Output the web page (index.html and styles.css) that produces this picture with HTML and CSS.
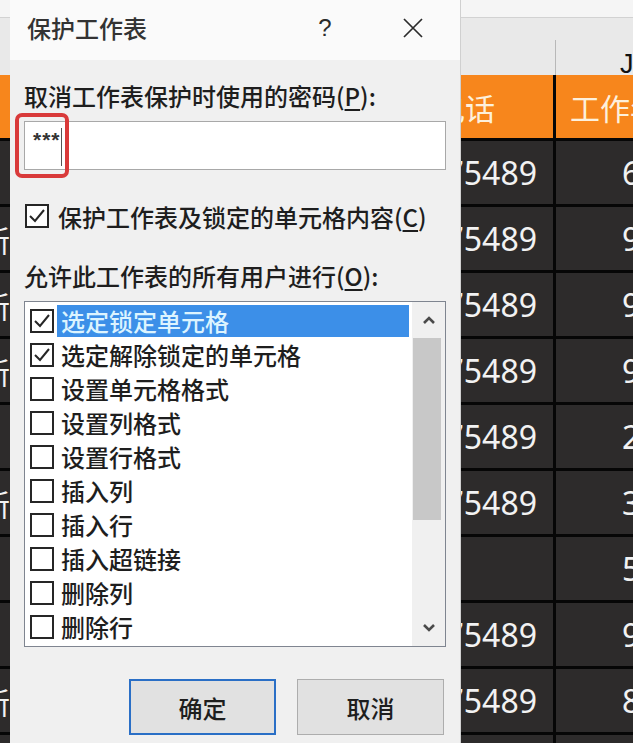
FILE: index.html
```html
<!DOCTYPE html>
<html lang="zh-CN">
<head>
    <meta charset="UTF-8">
    <meta name="viewport" content="width=device-width, initial-scale=1.0">
    <link rel="stylesheet" href="styles.css">
</head>
<body>
    <!-- spreadsheet behind the dialog -->
    <div class="sheet">
        <div class="sheet-top"></div>
        <div class="sheet-cols">
            <div></div>
            <div></div>
            <div class="colhead-j">J</div>
        </div>
        <div class="row head">
            <div class="cell a"></div>
            <div class="cell b">联系电话</div>
            <div class="cell c">工作年限</div>
        </div>
        <div class="row"><div class="cell a"></div><div class="cell b">75489</div><div class="cell c">6</div></div>
        <div class="row"><div class="cell a">张新</div><div class="cell b">75489</div><div class="cell c">9</div></div>
        <div class="row"><div class="cell a">李新</div><div class="cell b">75489</div><div class="cell c">9</div></div>
        <div class="row"><div class="cell a">王新</div><div class="cell b">75489</div><div class="cell c">9</div></div>
        <div class="row"><div class="cell a"></div><div class="cell b">75489</div><div class="cell c">2</div></div>
        <div class="row"><div class="cell a">赵新</div><div class="cell b">75489</div><div class="cell c">3</div></div>
        <div class="row"><div class="cell a"></div><div class="cell b"></div><div class="cell c">5</div></div>
        <div class="row"><div class="cell a"></div><div class="cell b">75489</div><div class="cell c">9</div></div>
        <div class="row"><div class="cell a">刘新</div><div class="cell b">75489</div><div class="cell c">8</div></div>
        <div class="row"><div class="cell a"></div><div class="cell b"></div><div class="cell c"></div></div>
    </div>

    <!-- protect sheet dialog -->
    <div class="dialog">
        <div class="titlebar">
            <span class="title">保护工作表</span>
            <div class="tb-buttons">
                <span class="help">?</span>
                <span class="close">
                    <svg width="22" height="22" viewBox="0 0 22 22"><path d="M2 2 L20 20 M20 2 L2 20" stroke="#2b2b2b" stroke-width="1.7" fill="none"/></svg>
                </span>
            </div>
        </div>
        <div class="body">
            <div class="label">取消工作表保护时使用的密码(<u>P</u>):</div>
            <div class="password">
                <span class="stars">***</span><span class="caret"></span>
                <div class="mark"></div>
            </div>
            <div class="check-row">
                <span class="box"><svg width="20" height="20" viewBox="0 0 20 20"><path d="M3 10 L8 15 L17 4" stroke="#262626" stroke-width="2" fill="none"/></svg></span>
                <span>保护工作表及锁定的单元格内容(<u>C</u>)</span>
            </div>
            <div class="label allow">允许此工作表的所有用户进行(<u>O</u>):</div>
            <div class="list">
                <div class="items">
                    <div class="item"><span class="box"><svg width="20" height="20" viewBox="0 0 20 20"><path d="M3 10 L8 15 L17 4" stroke="#262626" stroke-width="2" fill="none"/></svg></span><span class="text selected">选定锁定单元格</span></div>
                    <div class="item"><span class="box"><svg width="20" height="20" viewBox="0 0 20 20"><path d="M3 10 L8 15 L17 4" stroke="#262626" stroke-width="2" fill="none"/></svg></span><span class="text">选定解除锁定的单元格</span></div>
                    <div class="item"><span class="box"></span><span class="text">设置单元格格式</span></div>
                    <div class="item"><span class="box"></span><span class="text">设置列格式</span></div>
                    <div class="item"><span class="box"></span><span class="text">设置行格式</span></div>
                    <div class="item"><span class="box"></span><span class="text">插入列</span></div>
                    <div class="item"><span class="box"></span><span class="text">插入行</span></div>
                    <div class="item"><span class="box"></span><span class="text">插入超链接</span></div>
                    <div class="item"><span class="box"></span><span class="text">删除列</span></div>
                    <div class="item"><span class="box"></span><span class="text">删除行</span></div>
                </div>
                <div class="scrollbar">
                    <div class="arrow"><svg width="14" height="10" viewBox="0 0 14 10"><path d="M2 8 L7 3 L12 8" stroke="#4a4a4a" stroke-width="2.6" fill="none"/></svg></div>
                    <div class="thumb"></div>
                    <div class="track"></div>
                    <div class="arrow"><svg width="14" height="10" viewBox="0 0 14 10"><path d="M2 2 L7 7 L12 2" stroke="#4a4a4a" stroke-width="2.6" fill="none"/></svg></div>
                </div>
            </div>
            <div class="buttons">
                <button class="btn primary">确定</button>
                <button class="btn">取消</button>
            </div>
        </div>
    </div>
</body>
</html>
```

FILE: styles.css
```css
* {
    box-sizing: border-box;
}

body {
    margin: 0;
    width: 633px;
    height: 743px;
    overflow: hidden;
    position: relative;
    background: #2d2b2b;
    font-family: "Noto Sans CJK SC", sans-serif;
}

/* spreadsheet */
.sheet {
    width: 633px;
    height: 743px;
    overflow: hidden;
    display: flex;
    flex-direction: column;
}

.sheet-top {
    flex: none;
    height: 18px;
    background: #f5f5f5;
    border-bottom: 1px solid #d2d2d2;
}

.sheet-cols {
    flex: none;
    height: 57px;
    background: #e9e9e9;
    display: grid;
    grid-template-columns: 20px 535px 165px;
}

.colhead-j {
    margin-top: 22px;
    border-left: 1px solid #b8b8b8;
    padding-left: 64px;
    padding-top: 13px;
    font-family: "Liberation Sans", sans-serif;
    font-size: 27px;
    line-height: 22px;
    color: #111;
    overflow: hidden;
}

.row {
    flex: none;
    height: 66px;
    display: grid;
    grid-template-columns: 20px 536px 164px;
    border-bottom: 3px solid #060606;
    background: #2d2b2b;
}

.row.head {
    background: #f7861c;
}

.cell {
    display: flex;
    align-items: center;
    overflow: hidden;
    white-space: nowrap;
}

.cell.a {
    justify-content: flex-end;
    padding-right: 10px;
    font-size: 30px;
    color: #f2f2f2;
}

.cell.b {
    justify-content: flex-end;
    padding-right: 16px;
    border-right: 3px solid #060606;
    font-family: "Noto Sans", sans-serif;
    font-size: 32px;
    color: #f2f2f2;
}

.cell.c {
    padding-left: 66px;
    font-family: "Noto Sans", sans-serif;
    font-size: 32px;
    color: #f2f2f2;
}

.row.head .cell.b {
    padding-right: 58px;
    font-family: "Noto Sans CJK SC", sans-serif;
    font-size: 30px;
    color: #fdf0dc;
}

.row.head .cell.c {
    padding-left: 14px;
    font-family: "Noto Sans CJK SC", sans-serif;
    font-size: 30px;
    color: #fdf0dc;
}

/* dialog */
.dialog {
    position: absolute;
    left: 10px;
    top: 0;
    width: 451px;
    height: 743px;
    background: #f0f0f0;
    border-right: 1px solid #d0d0d0;
    color: #1e1e1e;
    font-size: 24px;
    font-weight: 500;
}

.titlebar {
    height: 60px;
    background: #fafafa;
    display: flex;
    align-items: center;
    justify-content: space-between;
    padding: 0 27px 4px 17px;
}

.title {
    color: #333;
    line-height: 30px;
}

.tb-buttons {
    display: flex;
    align-items: center;
    gap: 53px;
}

.help {
    width: 30px;
    text-align: center;
    font-family: "Liberation Sans", sans-serif;
    font-size: 24px;
    color: #2b2b2b;
}

.close {
    width: 40px;
    display: flex;
    justify-content: center;
}

.body {
    padding: 0 14px;
    display: flex;
    flex-direction: column;
}

.label {
    margin-top: 21px;
    line-height: 30px;
}

.label u {
    text-underline-offset: 3px;
}

.password {
    position: relative;
    margin-top: 10px;
    height: 49px;
    background: #fff;
    border: 1px solid #a8a8a8;
    display: flex;
    align-items: flex-start;
    padding: 6px 0 0 8px;
}

.stars {
    font-family: "Liberation Sans", sans-serif;
    font-size: 21px;
    font-weight: bold;
    letter-spacing: 1px;
    color: #333;
}

.caret {
    width: 1px;
    height: 38px;
    background: #555;
}

/* red highlight drawn over the password box */
.mark {
    position: absolute;
    left: -10px;
    top: -9px;
    width: 54px;
    height: 65px;
    border: 4px solid #d93a3a;
    border-radius: 7px;
}

.check-row {
    margin-top: 31px;
    height: 30px;
    display: flex;
    align-items: center;
    gap: 9px;
    padding-left: 1px;
}

.check-row u {
    text-underline-offset: 3px;
}

.box {
    width: 24px;
    height: 24px;
    border: 2px solid #262626;
    background: #fff;
    display: flex;
    align-items: center;
    justify-content: center;
    flex: none;
}

.allow {
    margin-top: 30px;
}

.list {
    margin-top: 10px;
    height: 346px;
    background: #fff;
    border: 1px solid #7f8590;
    display: flex;
}

.items {
    flex: 1;
    padding: 2px 0 0 5px;
}

.item {
    height: 34px;
    display: flex;
    align-items: center;
}

.text {
    flex: 1;
    margin: 0 3px;
    padding-left: 4px;
    height: 32px;
    line-height: 32px;
    font-size: 24px;
}

.text.selected {
    background: #3c8fe8;
    color: #dcf4ff;
}

.scrollbar {
    width: 33px;
    background: #f0f0f0;
    display: flex;
    flex-direction: column;
}

.arrow {
    height: 36px;
    display: flex;
    align-items: center;
    justify-content: center;
}

.thumb {
    height: 182px;
    margin: 0 4px 0 1px;
    background: #c8c8c8;
}

.track {
    flex: 1;
}

.buttons {
    margin-top: 32px;
    display: flex;
    justify-content: flex-end;
    gap: 21px;
    padding-right: 2px;
}

.btn {
    width: 147px;
    height: 56px;
    background: #e1e1e1;
    border: 1px solid #adadad;
    font-family: "Noto Sans CJK SC", sans-serif;
    font-size: 24px;
    font-weight: 500;
    color: #1e1e1e;
    padding: 0;
}

.btn.primary {
    border: 2px solid #2a6fc6;
}
```
